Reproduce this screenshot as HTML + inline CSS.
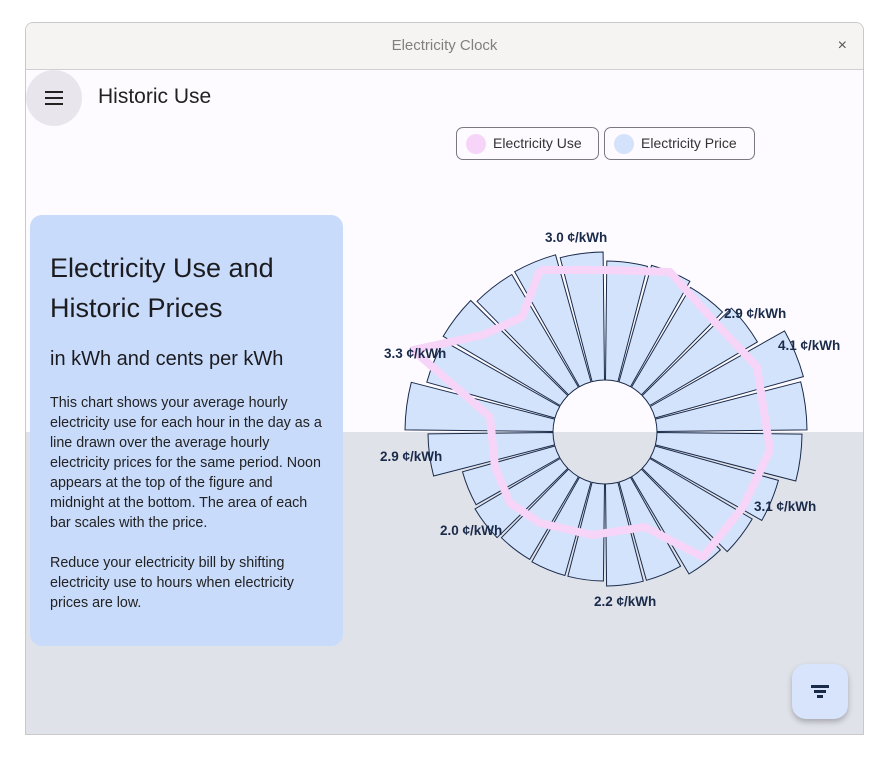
<!DOCTYPE html>
<html><head><meta charset="utf-8"><style>
*{margin:0;padding:0;box-sizing:border-box}
body{width:890px;height:764px;background:#fff;font-family:"Liberation Sans","DejaVu Sans",sans-serif;position:relative;overflow:hidden}
.win{position:absolute;left:25px;top:22px;width:839px;height:713px;border:1px solid #c9c9c9;border-radius:8px 8px 0 0;overflow:hidden;background:#fdfbff}
.title{height:47px;background:#f5f4f2;border-bottom:1px solid #d0d0d0;text-align:center;line-height:46px;font-size:15px;color:#808080;position:relative}
.x{position:absolute;right:16px;top:0;font-size:16px;color:#555}
.bottom{position:absolute;left:0;top:409px;width:100%;height:310px;background:#e0e2ea}
.menu{position:absolute;left:0;top:47px;width:56px;height:56px;border-radius:50%;background:#e8e6ec}
.menu i{position:absolute;left:19px;width:18px;height:2px;background:#222}
.h{position:absolute;left:72px;top:62px;font-size:21px;color:#222}
.leg{position:absolute;top:104px;height:33px;border:1px solid #7a7880;border-radius:7px;background:#fdfbff;font-size:14px;color:#333;line-height:31px}
.leg b{position:absolute;left:9px;top:6px;width:20px;height:20px;border-radius:50%}
.card{position:absolute;left:4px;top:192px;width:313px;height:431px;background:#c8dbfb;border-radius:12px;padding:0 20px;color:#1c1c20}
.card h1{font-weight:normal;font-size:27px;line-height:40px;margin-top:33px}
.card h2{font-weight:normal;font-size:20px;margin-top:20px}
.card p{font-size:14.3px;line-height:20px;margin-top:22px;color:#222}
.fab{position:absolute;left:766px;top:641px;width:56px;height:55px;border-radius:14px;background:#d8e3fc;box-shadow:0 3px 6px rgba(0,0,0,.25)}
.fab i{position:absolute;height:2.5px;background:#1a2b4a}
svg{position:absolute;left:0;top:0}
</style></head><body>
<div class="win">
<div class="title">Electricity Clock<span class="x">×</span></div>
<div class="bottom"></div>
<div class="menu"><i style="top:21px"></i><i style="top:27px"></i><i style="top:33px"></i></div>
<div class="h">Historic Use</div>
<div class="leg" style="left:430px;width:143px"><b style="background:#f6d5f8"></b><span style="padding-left:36px">Electricity Use</span></div>
<div class="leg" style="left:578px;width:151px"><b style="background:#d4e2fb"></b><span style="padding-left:36px">Electricity Price</span></div>
<div class="card">
<h1>Electricity Use and Historic Prices</h1>
<h2>in kWh and cents per kWh</h2>
<p>This chart shows your average hourly electricity use for each hour in the day as a line drawn over the average hourly electricity prices for the same period. Noon appears at the top of the figure and midnight at the bottom. The area of each bar scales with the price.</p>
<p style="margin-top:20px">Reduce your electricity bill by shifting electricity use to hours when electricity prices are low.</p>
</div>
<div class="fab"><i style="left:19px;top:21px;width:18px"></i><i style="left:22px;top:26px;width:12px"></i><i style="left:25px;top:31px;width:6px"></i></div>
</div>
<svg id="s" width="890" height="764" style="font-family:'Liberation Sans',sans-serif;font-size:13.5px;font-weight:bold;fill:#1a2b4a">
<g id="bars"></g>
<polyline points="540,270 603,270 670,272 713,320 757,367 770,450 743,507 703,557 645,527 592,535 540,523 510,503 495,467 490,417 413,350 483,335 522,317 540,270" fill="none" stroke="#f6d5f8" stroke-width="8" stroke-linejoin="round"/>
<text x="545" y="242">3.0 ¢/kWh</text>
<text x="724" y="318">2.9 ¢/kWh</text>
<text x="778" y="350">4.1 ¢/kWh</text>
<text x="384" y="358">3.3 ¢/kWh</text>
<text x="380" y="461">2.9 ¢/kWh</text>
<text x="754" y="511">3.1 ¢/kWh</text>
<text x="440" y="535">2.0 ¢/kWh</text>
<text x="594" y="606">2.2 ¢/kWh</text>
</svg>
<script>
var r=[171,173,168,177,206,202,197,180,171,165,154,154,149,149,148,151,148,177,200,185,188,183,184,180];
var cx=605,cy=432,ri=52,g='';
function p(a,rr){a=a*Math.PI/180;return (cx+rr*Math.sin(a)).toFixed(1)+','+(cy-rr*Math.cos(a)).toFixed(1)}
for(var i=0;i<24;i++){var a0=i*15+0.6,a1=i*15+14.4,R=r[i];
g+='<path d="M'+p(a0,ri)+' L'+p(a0,R)+' A'+R+','+R+' 0 0 1 '+p(a1,R)+' L'+p(a1,ri)+' A'+ri+','+ri+' 0 0 0 '+p(a0,ri)+'Z" fill="#d4e3fc" stroke="#1a2b4a" stroke-width="1"/>';}
document.getElementById('bars').innerHTML=g;
</script>
</body></html>
